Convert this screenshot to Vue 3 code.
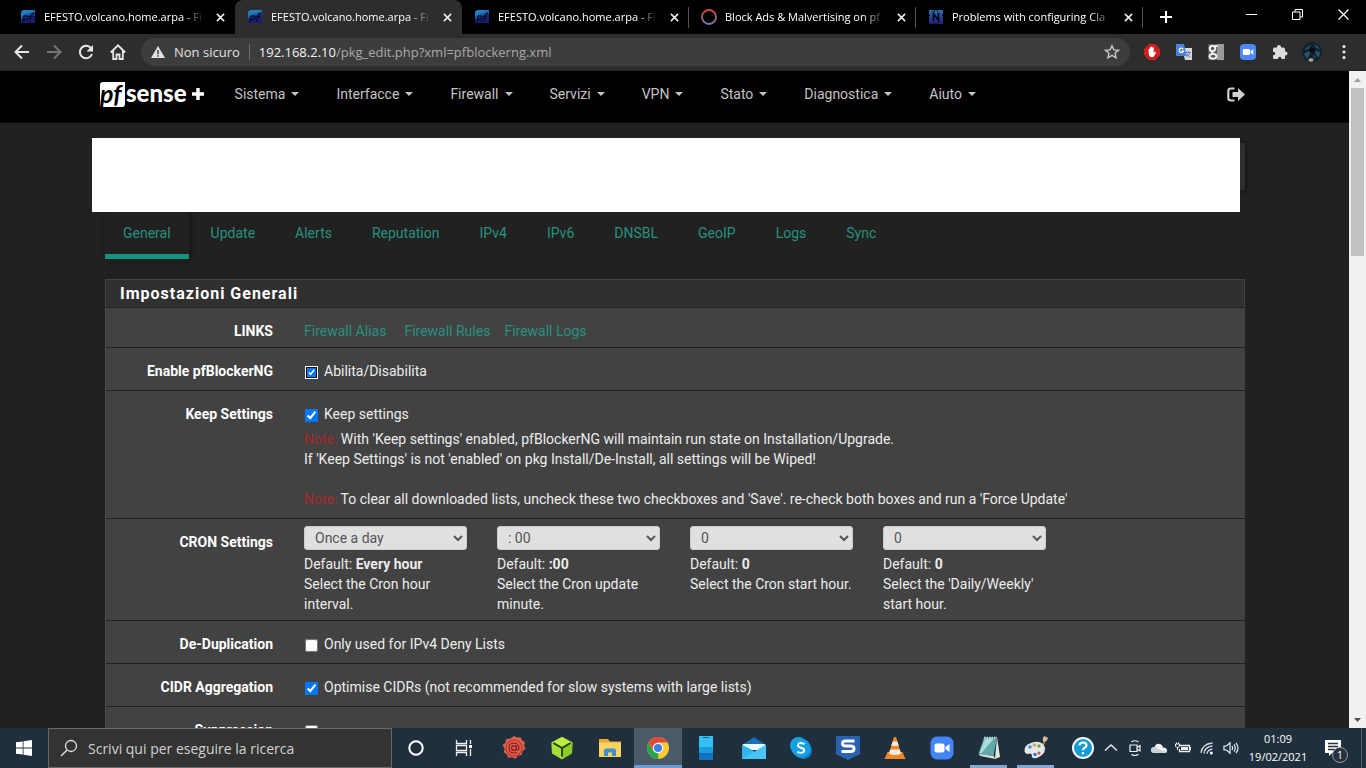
<script setup>
import { ref } from 'vue'

const tabs = [
  { title: 'EFESTO.volcano.home.arpa - Fi', icon: 'pf' },
  { title: 'EFESTO.volcano.home.arpa - Fi', icon: 'pf', active: true },
  { title: 'EFESTO.volcano.home.arpa - Fi', icon: 'pf' },
  { title: 'Block Ads & Malvertising on pf', icon: 'ring' },
  { title: 'Problems with configuring Cla', icon: 'net' },
]
const menus = ['Sistema', 'Interfacce', 'Firewall', 'Servizi', 'VPN', 'Stato', 'Diagnostica', 'Aiuto']
const sections = ['General', 'Update', 'Alerts', 'Reputation', 'IPv4', 'IPv6', 'DNSBL', 'GeoIP', 'Logs', 'Sync']
const crons = [
  { id: 'hour', value: 'Once a day', def: 'Every hour', help: 'Select the Cron hour interval.' },
  { id: 'minute', value: ': 00', def: ':00', help: 'Select the Cron update minute.' },
  { id: 'start', value: '0', def: '0', help: 'Select the Cron start hour.' },
  { id: 'daily', value: '0', def: '0', help: "Select the 'Daily/Weekly' start hour." },
]
const enabled = ref(true)
const keep = ref(true)
const dedup = ref(false)
const cidr = ref(true)
const suppression = ref(false)
</script>

<template>
  <div class="desktop">
    <header class="tabstrip">
      <div class="tabs">
        <div v-for="(t, i) in tabs" :key="i" class="tab" :class="{ active: t.active, ruled: i >= 2 }">
          <svg v-if="t.icon === 'pf'" class="fav" viewBox="0 0 16 16">
            <defs>
              <linearGradient id="pfg" x1="0" y1="0" x2="0.4" y2="1">
                <stop offset="0.3" stop-color="#1f7fc4" /><stop offset="0.75" stop-color="#1c1c70" />
              </linearGradient>
            </defs>
            <path d="M3 1h12v13H1V3z" fill="url(#pfg)" />
            <path d="M2.500 13 4.500 6.500M4.500 7h2.300q1.500 0 1 1.800t-2 1.800H4M9.500 13l2-7q.6-1.800 2.500-1.500M9 7.500h4" fill="none" stroke="#0b0f2c" stroke-width="1.500" />
          </svg>
          <svg v-else-if="t.icon === 'ring'" class="fav" viewBox="0 0 16 16">
            <defs>
              <linearGradient id="rg" x1="0" y1="0" x2="0" y2="1"><stop stop-color="#d8483c" /><stop offset="1" stop-color="#7d76b8" /></linearGradient>
            </defs>
            <circle cx="8" cy="8" r="7" fill="none" stroke="url(#rg)" stroke-width="1.800" />
          </svg>
          <svg v-else class="fav" viewBox="0 0 16 16">
            <defs>
              <linearGradient id="ng" x1="0" y1="0" x2="0" y2="1"><stop stop-color="#2c6fae" /><stop offset="1" stop-color="#2b1b7a" /></linearGradient>
            </defs>
            <path d="M1 1h5v1.500h1V1h2v1.500h1V1h5v5h-1v1h1v2h-1v1h1v5h-5v-1H9v1H7v-1H6v1H1v-5h1V9H1V7h1V6H1z" fill="url(#ng)" />
            <path d="M5.500 12V4.500l5 7V4" fill="none" stroke="#060a1c" stroke-width="1.800" />
          </svg>
          <span class="title">{{ t.title }}</span>
          <button class="close" aria-label="Chiudi scheda">
            <svg viewBox="0 0 10 10"><path d="M1 1l8 8M9 1l-8 8" stroke="#f1f1f1" stroke-width="1.700" /></svg>
          </button>
        </div>
      </div>
      <button class="plus" aria-label="Nuova scheda"><svg viewBox="0 0 12 12"><path d="M6 0v12M0 6h12" stroke="#fff" stroke-width="2" /></svg></button>
      <div class="wincontrols">
        <button aria-label="Riduci"><svg viewBox="0 0 11 11"><path d="M0 5.500h11" stroke="#fff" /></svg></button>
        <button aria-label="Ripristina"><svg viewBox="0 0 11 11"><path d="M.5 3h7.500v7.500H.5zM3 3V.5h7.500V8H8" fill="none" stroke="#fff" /></svg></button>
        <button aria-label="Chiudi"><svg viewBox="0 0 11 11"><path d="M.5.5l10 10M10.500.5l-10 10" stroke="#fff" stroke-width="1.200" /></svg></button>
      </div>
    </header>

    <div class="toolbar">
      <div class="navbtns">
        <button aria-label="Indietro"><svg viewBox="0 0 16 16"><path d="M15 8H2M8 1.500L1.500 8 8 14.500" fill="none" stroke="#e6e6e6" stroke-width="2" /></svg></button>
        <button aria-label="Avanti"><svg viewBox="0 0 16 16"><path d="M1 8h13M8 1.500L14.500 8 8 14.500" fill="none" stroke="#757575" stroke-width="2" /></svg></button>
        <button aria-label="Ricarica"><svg viewBox="0 0 16 16"><path d="M13.300 4.600A6.200 6.200 0 1 0 14 10" fill="none" stroke="#e6e6e6" stroke-width="2" /><path d="M15 1v6.500H8.500z" fill="#e6e6e6" /></svg></button>
        <button aria-label="Pagina iniziale"><svg viewBox="0 0 16 16"><path d="M.8 8.500L8 1.300l7.200 7.200M3.200 7v8h3.300v-4.500h3V15h3.300V7" fill="none" stroke="#e6e6e6" stroke-width="1.800" /></svg></button>
      </div>
      <div class="omnibox">
        <svg class="warn" viewBox="0 0 14 14"><path d="M7 1l7 12H0z" fill="#e4e4e4" /><path d="M7 5v4.300M7 10.300v1.500" stroke="#3b3b3b" stroke-width="1.500" /></svg>
        <span class="unsafe">Non sicuro</span>
        <span class="sep"></span>
        <span class="url"><b>192.168.2.10</b>/pkg_edit.php?xml=pfblockerng.xml</span>
        <button class="star" aria-label="Preferiti"><svg viewBox="0 0 16 16"><path d="M8 1.700l1.900 4.200 4.600.4-3.500 3 1.100 4.500L8 11.400l-4.100 2.400L5 9.300l-3.500-3 4.600-.4z" fill="none" stroke="#c8c8c8" stroke-width="1.400" /></svg></button>
      </div>
      <div class="extensions">
        <svg viewBox="0 0 16 16"><path d="M5 0h6l5 5v6l-5 5H5l-5-5V5z" fill="#d01f1f" /><path d="M4.600 8.500V5.200q.7-.8 1.200 0V3.500q.7-.8 1.300 0v-.7q.7-.8 1.300 0v1q.7-.8 1.300 0v5l1.300-1q1-.2.900.6L9.800 12.600q-2.800 1.500-4.600-.8z" fill="#fff" /></svg>
        <svg viewBox="0 0 16 16"><path d="M6 4h10v12H9z" fill="#d5d9de" /><path d="M0 0h8l3 12H0z" fill="#4b83dc" /><path d="M7.300 5.200A2.200 2.200 0 1 0 7.500 7H5.400" fill="none" stroke="#fff" stroke-width="1.100" /><path d="M9.800 8.500H15M12.300 7v1.500M14 8.500q-1 3-3.500 4.500M11 10l3 3.500" fill="none" stroke="#6a7f9e" /></svg>
        <svg viewBox="0 0 16 16"><path d="M0 0h16v16H0z" fill="#9a9a9a" /><path d="M0 0h9v16H0z" fill="#565656" /><circle cx="4.500" cy="4.500" r="2.700" fill="none" stroke="#f0f0f0" stroke-width="2" /><path d="M5 7.500q-2 1.200 0 2M7 2h2.500" fill="none" stroke="#f0f0f0" stroke-width="2" /><ellipse cx="5" cy="12.300" rx="3.500" ry="2.400" fill="none" stroke="#f0f0f0" stroke-width="2" /></svg>
        <svg viewBox="0 0 16 16"><rect width="16" height="16" rx="4" fill="#4a8af4" /><rect x="2.800" y="5" width="7.200" height="6" rx="1.200" fill="#fff" /><path d="M10.500 7.300L13.300 5v6l-2.800-2.200z" fill="#fff" /></svg>
        <svg viewBox="0 0 16 16"><path d="M1 5q0-1.500 1.500-1.500H5V3a2 2 0 0 1 4 0v.5h2.500Q13 3.500 13 5v2.500h.5a2 2 0 0 1 0 4H13V14q0 1-1 1H9.500v-.5a1.700 1.700 0 0 0-3.400 0v.5H2q-1 0-1-1v-2.700h.5a1.800 1.800 0 0 0 0-3.600H1z" fill="#dcdcdc" /></svg>
        <svg class="avatar" viewBox="0 0 20 20"><circle cx="10" cy="10" r="10" fill="#10222d" /><path d="M2 8q3-4 7-5l-2 4zM12 2q4 1 6 5l-4-1z" fill="#24505f" /><path d="M2 12l5-3 1 3-3 5zM13 9l5 1-1 5-3-2z" fill="#2c5468" /><path d="M8 5l5 2-2 5-4-3z" fill="#0a0d12" /><path d="M10 13l4 1-2 4z" fill="#1d3f4e" /><ellipse cx="9" cy="18" rx="2.500" ry="1.800" fill="#b9a79b" /></svg>
        <svg viewBox="0 0 16 16"><g fill="#e6e6e6"><circle cx="8" cy="2.500" r="1.600" /><circle cx="8" cy="8" r="1.600" /><circle cx="8" cy="13.500" r="1.600" /></g></svg>
      </div>
    </div>

    <div class="viewport">
      <main class="page">
        <nav class="mainnav">
          <div class="wrap">
            <a class="logo" href="#" aria-label="pfSense plus"><span class="pf">pf</span><span class="sense">sense</span><svg viewBox="0 0 14 14"><path d="M7 1v12M1 7h12" stroke="#fff" stroke-width="3.400" /></svg></a>
            <a v-for="m in menus" :key="m" href="#" class="menu">{{ m }}<i class="caret"></i></a>
            <a class="logout" href="#" aria-label="Logout">
              <svg viewBox="0 0 18 15"><path d="M7.500 1.500H4Q1.300 1.500 1.300 4v7Q1.300 13.500 4 13.500h3.500" fill="none" stroke="#cfcfcf" stroke-width="2.200" /><path d="M5.500 5H11V1l7 6.500-7 6.500v-4H5.500z" fill="#cfcfcf" /></svg>
            </a>
          </div>
        </nav>

        <div class="wrap column">
          <div class="crumbs"><div class="cover"></div></div>
          <nav class="sections">
            <a v-for="(s, i) in sections" :key="s" href="#" :class="{ current: i === 0 }">{{ s }}</a>
          </nav>

          <section class="panel">
            <h2>Impostazioni Generali</h2>
            <div class="row links">
              <span class="name">LINKS</span>
              <div class="field linklist"><a href="#" class="first">Firewall Alias</a><a href="#">Firewall Rules</a><a href="#">Firewall Logs</a></div>
            </div>
            <div class="row">
              <span class="name">Enable pfBlockerNG</span>
              <div class="field"><label class="check"><input v-model="enabled" type="checkbox" class="focused" />Abilita/Disabilita</label></div>
            </div>
            <div class="row">
              <span class="name">Keep Settings</span>
              <div class="field">
                <label class="check"><input v-model="keep" type="checkbox" />Keep settings</label>
                <p class="help"><em>Note:</em> With 'Keep settings' enabled, pfBlockerNG will maintain run state on Installation/Upgrade.<br />If 'Keep Settings' is not 'enabled' on pkg Install/De-Install, all settings will be Wiped!<br /><br /><em>Note:</em> To clear all downloaded lists, uncheck these two checkboxes and 'Save'. re-check both boxes and run a 'Force Update'</p>
              </div>
            </div>
            <div class="row cron">
              <span class="name">CRON Settings</span>
              <div class="field crons">
                <div v-for="c in crons" :key="c.id">
                  <select :id="c.id"><option>{{ c.value }}</option></select>
                  <label :for="c.id">Default: <b>{{ c.def }}</b><br />{{ c.help }}</label>
                </div>
              </div>
            </div>
            <div class="row">
              <span class="name">De-Duplication</span>
              <div class="field"><label class="check"><input v-model="dedup" type="checkbox" />Only used for IPv4 Deny Lists</label></div>
            </div>
            <div class="row">
              <span class="name">CIDR Aggregation</span>
              <div class="field"><label class="check"><input v-model="cidr" type="checkbox" />Optimise CIDRs (not recommended for slow systems with large lists)</label></div>
            </div>
            <div class="row">
              <label class="name" for="suppression">Suppression</label>
              <div class="field check"><input id="suppression" v-model="suppression" type="checkbox" /></div>
            </div>
          </section>
        </div>
      </main>
      <div class="scrollbar">
        <svg viewBox="0 0 17 17"><path d="M5 11l3.500-4 3.500 4z" fill="#a0a0a0" /></svg>
        <div class="track"><div class="thumb"></div></div>
        <svg viewBox="0 0 17 17"><path d="M5 7l3.500 4L12 7z" fill="#505050" /></svg>
      </div>
    </div>

    <footer class="taskbar">
      <button class="start" aria-label="Start"><svg viewBox="0 0 16 16"><path d="M0 2.300L6.700 1.400v6.200H0zM7.500 1.300L16 0v7.600H7.500zM0 8.400h6.700v6.200L0 13.700zM7.500 8.400H16V16l-8.500-1.200z" fill="#fff" /></svg></button>
      <label class="search">
        <svg viewBox="0 0 18 18"><circle cx="11" cy="7" r="5.500" fill="none" stroke="#e0e0e0" stroke-width="1.300" /><path d="M7 11L1 17" stroke="#e0e0e0" stroke-width="1.400" /></svg>
        <input type="text" placeholder="Scrivi qui per eseguire la ricerca" aria-label="Cerca" />
      </label>
      <div class="apps">
        <button aria-label="Cortana"><svg viewBox="0 0 24 24"><circle cx="12" cy="12" r="6.700" fill="none" stroke="#fff" stroke-width="2" /></svg></button>
        <button aria-label="Attività"><svg viewBox="0 0 24 24"><path d="M4.500 4v3.500h10V4M4.500 20v-3.500h10V20M4.500 9.500h10v5h-10zM18.500 4v4M18.500 13v7" fill="none" stroke="#eee" stroke-width="1.300" /><path d="M17 9h3v3h-3z" fill="#fff" /></svg></button>
        <button class="pinned" aria-label="Posta certificata"><svg viewBox="0 0 24 24"><path d="M12 0l3 1.500 3.500-.2 1.500 3 3 2-1 3.500 1.500 3-3 2.500-.8 3.800-3.700.7-2.500 3-3.500-1.500-4 .5-1-3.300-3.300-2.200 1-3.500L.5 9l3-2.300L4 3l4-.2z" fill="#e0604f" /><circle cx="12" cy="12" r="8" fill="none" stroke="#b23a30" stroke-width="1.200" /><circle cx="12" cy="12" r="2.400" fill="none" stroke="#8d1f1c" stroke-width="1.400" /><path d="M14.500 9.300v4q2.200 1.500 2.500-1.300-.5-5-5.200-5-4.800.3-4.800 5 .2 5 5 5 2 0 3-.8" fill="none" stroke="#8d1f1c" stroke-width="1.200" /></svg></button>
        <button aria-label="Balena"><svg viewBox="0 0 24 24"><path d="M12 .8l10.700 5.700L12 12.500 1.300 6.500z" fill="#b9f03e" /><path d="M1.300 6.500L12 12.500v11L2 17.500z" fill="#a5de35" /><path d="M22.700 6.500L12 12.500v11l10-6z" fill="#8dcc26" /><path d="M3.500 7L12 12l8.500-5M12 12v8.500" fill="none" stroke="#1e3a14" stroke-width="1.800" /></svg></button>
        <button aria-label="Esplora file"><svg viewBox="0 0 24 24"><path d="M1 3h9l2 2.500h11V21H1z" fill="#e8a92c" /><path d="M1 6.500h22V21H1z" fill="#f9d465" /><path d="M6 20v-5.500q0-2 2-2h8q2 0 2 2V20h-4v-3.500h-4V20z" fill="#3f8fc9" /></svg></button>
        <button class="on" aria-label="Chrome"><svg viewBox="0 0 24 24"><circle cx="12" cy="12" r="11" fill="#fbc933" /><path d="M2.500 6.500A11 11 0 0 1 21.500 6.500H12L7.500 14.500z" fill="#e0483b" /><path d="M2.500 6.500L7.300 14.700 12 17l.5 6A11 11 0 0 1 2.500 6.500z" fill="#2ba24c" /><circle cx="12" cy="12" r="5.200" fill="#fff" /><circle cx="12" cy="12" r="4.100" fill="#3f7fe8" /></svg></button>
        <button aria-label="Telefono"><svg viewBox="0 0 24 24"><path d="M5 0h14v24H5z" fill="#1272be" /><path d="M5 0h14v17H5z" fill="#1b9ee0" /><path d="M5 0h14v11H5z" fill="#33c1f1" /><path d="M9 1.500h6" stroke="#17608d" /></svg></button>
        <button aria-label="Posta"><svg viewBox="0 0 24 24"><path d="M0 9L12 1l12 8v4H0z" fill="#1a6fb8" /><path d="M1 8h22v6H1z" fill="#f2fafd" /><path d="M0 8.500l12 6.500v8H0z" fill="#2fb5ec" /><path d="M24 8.500V23H0z" fill="#46c6f5" /></svg></button>
        <button aria-label="Skype"><svg viewBox="0 0 24 24"><circle cx="9.500" cy="9.500" r="8.500" fill="#16a5e6" /><circle cx="14.500" cy="14.500" r="8.500" fill="#1081d0" /><circle cx="12" cy="12" r="9.500" fill="#13a0e4" /><path d="M15.500 8.300Q14 7 12 7q-3 .1-3 2.300 0 1.900 3 2.400 3.200.6 3.200 2.700-.2 2.400-3.300 2.500-2.200 0-3.600-1.300" fill="none" stroke="#fff" stroke-width="1.900" /></svg></button>
        <button aria-label="Simplenote"><svg viewBox="0 0 24 24"><path d="M0 0h24v18l-12 6-12-6z" fill="#2b62ad" /><path d="M18.500 5H9.500Q6.500 5 6.500 7.500T9.500 10h5Q18 10 18 12.700T14.500 15.500H5.500" fill="none" stroke="#fff" stroke-width="3" /></svg></button>
        <button aria-label="VLC"><svg viewBox="0 0 24 24"><path d="M4.500 16h15l3 7h-21z" fill="#f5871f" /><path d="M11 1h2l5.500 18q-6.500 3-13 0z" fill="#f28a24" /><path d="M9.600 5.500h4.800l1.400 4.300H8.200zM7.200 13.500h9.600l1.300 4q-6 3-12.200 0z" fill="#f0ece7" /></svg></button>
        <button aria-label="Zoom"><svg viewBox="0 0 24 24"><rect x=".5" y=".5" width="23" height="23" rx="6.500" fill="#4285f4" /><rect x="4.500" y="7.500" width="10" height="9" rx="2" fill="#fff" /><path d="M15.500 11l4-3v8l-4-3z" fill="#fff" /></svg></button>
        <button class="open" aria-label="Blocco note"><svg viewBox="0 0 24 24"><path d="M20 1l3 20-5 2z" fill="#e3e7dd" /><path d="M7 1.500h13L16.500 20l-15-2z" fill="#5fa9ab" /><path d="M8 2.500h9L4.500 17H2.500z" fill="#a9dcd6" /><path d="M1.500 18l15 2 2 3-15-3z" fill="#dfe6dc" /><path d="M7 1.500h13" stroke="#dbe2e0" stroke-width="1.600" stroke-dasharray="1.500 1" /></svg></button>
        <button class="open" aria-label="Paint"><svg viewBox="0 0 24 24"><path d="M17.500 14.500L21 3" stroke="#a97a4b" stroke-width="2.200" /><path d="M19 5q-1-4 2-5 1 1.500 3 1.500-.5 3.500-3.500 4.500z" fill="#d8bd91" /><path d="M7 7q7-3 12 1 4 5 0 10-5 5-10 4-2-1-1-3-1-2.500-4-1-3 0-3.500-3Q0 9 7 7z" fill="#e6e8e8" /><circle cx="6" cy="11" r="1.800" fill="#4695d6" /><circle cx="10.500" cy="9" r="1.800" fill="#e9a33a" /><circle cx="15" cy="10" r="1.700" fill="#67aa4d" /><circle cx="11" cy="18.500" r="1.800" fill="#3a79c9" /><circle cx="15" cy="17" r="1.500" fill="#cf4a3e" /></svg></button>
      </div>
      <div class="tray">
        <svg class="help-ic" viewBox="0 0 24 24"><circle cx="12" cy="12" r="11" fill="#f4fafd" /><circle cx="12" cy="12" r="9" fill="#139ad7" /><path d="M8.500 9.500q0-3 3.500-3t3.500 2.800q0 1.700-1.800 2.500-1.700.8-1.700 2.500M12 16v2.200" fill="none" stroke="#fff" stroke-width="2.200" /></svg>
        <svg viewBox="0 0 16 16"><path d="M2 10.500L8 5l6 5.500" fill="none" stroke="#eee" stroke-width="1.400" /></svg>
        <svg viewBox="0 0 16 16"><path d="M3 5h7v6.500H3zM10 7.500l3-2v5.500l-3-2M4.500 2q3-2.500 7 0M4.500 14.300q3 2.500 7 0" fill="none" stroke="#eee" stroke-width="1.200" /></svg>
        <svg viewBox="0 0 16 16"><path d="M4 13Q0 13 0 10t3.500-3Q5 3 9 4q2.500.7 3 3.500 4 0 4 3t-3 2.500z" fill="#f2f2f2" /><path d="M3.500 7q3 0 4 2.200L16 12q-1 1-3 1H4Q0 13 0 10q.4-2.800 3.500-3z" fill="#cdd2d5" /></svg>
        <svg viewBox="0 0 16 16"><path d="M5 5.500h9.500v6H4.500V9M15.500 7v3" fill="none" stroke="#eee" stroke-width="1.300" /><path d="M6 7h7v3H6z" fill="#eee" /><path d="M.5 4h4v2.500q-2 2-4 0zM1.500 2.500V4M3.500 2.500V4M2.500 7.500V10" fill="none" stroke="#eee" /></svg>
        <svg viewBox="0 0 16 16"><path d="M2 13Q3 4 13.500 3M5 13.500q.5-6.500 8.500-7.500M8 13.800q.5-4 5.500-4.600" fill="none" stroke="#d4d8da" stroke-width="1.300" /><circle cx="12.300" cy="13" r="1.500" fill="#fff" /></svg>
        <svg viewBox="0 0 16 16"><path d="M1 6h2.500L7 2.800v10.400L3.500 10H1zM9 6q1.200 2 0 4M11 4.300q2.500 3.700 0 7.400M13 2.800q4 5.200 0 10.400" fill="none" stroke="#eee" stroke-width="1.200" /></svg>
        <div class="clock"><span>01:09</span><span>19/02/2021</span></div>
        <button class="notes" aria-label="Notifiche"><svg viewBox="0 0 16 16"><path d="M0 0h16v13H7l-3 3v-3H0z" fill="#fff" /><path d="M3 3.500h10M3 6.500h10M3 9.500h7" stroke="#26333e" stroke-width="1.300" /></svg><span class="count">1</span></button>
      </div>
    </footer>
  </div>
</template>

<style>
body { margin: 0; overflow: hidden; background: #212121; }
</style>

<style scoped>
* { box-sizing: border-box; }
button { padding: 0; border: 0; background: none; display: flex; align-items: center; justify-content: center; font-family: inherit; color: #fff; }
svg { display: block; flex: none; }
a { text-decoration: none; color: #27917f; }
.desktop { height: 100vh; display: flex; flex-direction: column; font-family: "Open Sans", "Noto Sans", sans-serif; color: #fff; }

.tabstrip { flex: none; height: 34px; background: #000; display: flex; }
.tabs { flex: 0 1 1143px; min-width: 0; display: flex; padding-left: 8px; }
.tab { flex: 1; min-width: 0; display: flex; align-items: center; padding: 0 6px 0 12px; border-right: 1px solid transparent; }
.tab.ruled { border-image: linear-gradient(#000 8px, #555 8px, #555 27px, #000 27px) 1; }
.tab.active { background: #2d2d2d; border-radius: 8px 8px 0 0; }
.fav { width: 16px; height: 16px; }
.title { flex: 1; min-width: 0; margin-left: 8px; font-size: 11px; line-height: 18px; white-space: nowrap; overflow: hidden; -webkit-mask-image: linear-gradient(90deg, #000 calc(100% - 26px), transparent calc(100% - 4px)); mask-image: linear-gradient(90deg, #000 calc(100% - 26px), transparent calc(100% - 4px)); }
.close { width: 16px; height: 16px; margin-left: 4px; }
.close svg { width: 9px; height: 9px; }
.plus { width: 46px; }
.plus svg { width: 12px; height: 12px; }
.wincontrols { margin-left: auto; display: flex; height: 28px; }
.wincontrols button { width: 46px; }
.wincontrols svg { width: 11px; height: 11px; }

.toolbar { flex: none; height: 37px; background: #2d2d2d; border-bottom: 1px solid #242424; display: flex; align-items: center; }
.navbtns { display: flex; padding: 0 7px 0 6px; }
.navbtns button { width: 32px; height: 32px; }
.navbtns svg { width: 16px; height: 16px; }
.omnibox { flex: 1; min-width: 0; height: 28px; border-radius: 14px; background: #3d3d3d; display: flex; align-items: center; padding: 0 10px; font-size: 13px; line-height: 20px; white-space: nowrap; }
.warn { width: 14px; height: 14px; }
.unsafe { margin-left: 9px; color: #e0e0e0; }
.sep { width: 1px; height: 16px; background: #6c6c6c; margin: 0 9px; }
.url { color: #a8a8a8; flex: 1; min-width: 0; overflow: hidden; }
.url b { font-weight: 400; color: #f4f4f4; }
.star svg { width: 16px; height: 16px; }
.extensions { display: flex; align-items: center; gap: 16px; padding: 0 14px 0 14px; }
.extensions svg { width: 16px; height: 16px; }
.extensions .avatar { width: 20px; height: 20px; margin: 0 -2px; }

.viewport { flex: 1; min-height: 0; display: flex; }
.page { flex: 1; min-width: 0; overflow: hidden; background: #212121; font-family: Roboto, "Liberation Sans", sans-serif; font-size: 14px; line-height: 20px; }
.wrap { max-width: 1141px; margin: 0 auto; padding-left: 1px; }
.mainnav { background: #000; height: 52px; border-bottom: 1px solid #101010; }
.mainnav .wrap { display: flex; align-items: center; height: 46px; }
.logo { display: flex; align-items: center; color: #fff; margin: 0 30px 0 -5px; font-family: Lato, sans-serif; }
.pf { width: 25px; height: 25px; border-radius: 3px 0 3px 0; background: #fff; color: #000; font-size: 25px; line-height: 22px; font-weight: 700; font-style: italic; }
.sense { font-size: 24px; line-height: 24px; font-weight: 900; margin-left: 1px; padding-bottom: 2px; }
.logo svg { width: 14px; height: 14px; margin-left: 4px; }
.menu { display: flex; align-items: center; color: #c3c3c3; margin-right: 37px; }
.caret { border: 4px solid transparent; border-top-color: #c3c3c3; border-bottom: 0; margin-left: 6px; }
.logout { margin-left: auto; }
.logout svg { width: 18px; height: 15px; }

.crumbs { position: relative; height: 47px; margin-top: 20px; background: #2e2e2e; box-shadow: 1px 1px 3px #111; }
.cover { position: absolute; left: -13px; right: 5px; top: -5px; height: 74px; background: #fff; z-index: 1; }
.sections { display: flex; gap: 4px; padding-top: 20px; }
.sections a { padding: 13px 18px; border-bottom: 5px solid transparent; height: 49px; }
.sections .current { border-color: #119580; box-shadow: 2px 0 5px #151515; }

.panel { margin-top: 20px; background: #424242; border-left: 1px solid #4a4a4a; }
.panel h2 { margin: 0 0 0 -1px; height: 29px; padding: 4px 14px; border: 1px solid #424242; border-bottom-color: #212121; background: #303030; font-size: 16px; line-height: 20px; font-weight: 700; letter-spacing: 1px; }
.row { display: grid; grid-template-columns: 183px 1fr; padding: 13px 0 9px; border-bottom: 1px solid #212121; color: #ececec; }
.row.links { padding-bottom: 6px; }
.row.cron { padding: 7px 0 6px; }
.name { text-align: right; padding-right: 16px; font-weight: 700; color: #fff; }
.cron .name { padding-top: 6px; }
.field { padding-left: 15px; min-width: 0; }
.linklist a { margin-right: 14px; }
.linklist .first { margin-right: 18px; }
.check { display: flex; width: max-content; min-height: 20px; }
.check input { width: 13px; height: 13px; margin: 5px 6px 0 1px; accent-color: #0075ff; }
.check .focused { width: 9px; height: 9px; margin: 7px 8px 0 3px; outline: 1px solid #fff; outline-offset: 1px; border-radius: 2px; box-shadow: 0 0 0 1px #101010; }
.help { margin: 5px 0 0; }
.help em { font-style: normal; color: #a52a2a; }
.crons { display: grid; grid-template-columns: repeat(4, minmax(0, 1fr)); gap: 30px; max-width: 757px; }
.crons select { display: block; width: 100%; height: 24px; padding: 0 6px; margin-bottom: 4px; border: 1px solid #ccc; border-radius: 3px; background-color: #e0e0e0; color: #555; font-family: inherit; font-size: 14px; }
.crons label { display: block; }

.scrollbar { flex: none; width: 17px; background: #f1f1f1; display: flex; flex-direction: column; }
.scrollbar svg { width: 17px; height: 17px; }
.track { flex: 1; padding: 0 2px; }
.thumb { height: 27%; background: #c1c1c1; }

.taskbar { flex: none; height: 40px; background: #1f2f3d; display: flex; align-items: stretch; }
.start { width: 48px; }
.start svg { width: 16px; height: 16px; }
.search { flex: 0 1 344px; display: flex; align-items: center; border: 1px solid #686868; background: #333; padding: 0 11px; gap: 10px; }
.search svg { width: 18px; height: 18px; }
.search input { flex: 1; min-width: 0; border: 0; padding: 0; background: none; font-family: inherit; font-size: 14px; color: #d2d2d2; outline: 0; }
.search input::placeholder { color: #d2d2d2; opacity: 1; }
.apps { flex: 0 1 auto; display: flex; }
.apps button { flex: 0 1 48px; width: 48px; border: solid transparent; border-width: 3px 0; }
.apps button:nth-child(n + 8) { flex-basis: 47px; width: 47px; }
.apps .pinned { margin-left: 2px; }
.apps button.on { background: #4b5a68; border-top-color: #4b5a68; border-bottom-color: #7399d2; }
.apps .open { border-image: linear-gradient(90deg, transparent 5px, #86a5d0 5px, #86a5d0 42px, transparent 42px) 0 0 3 0; }
.apps svg { width: 24px; height: 24px; }
.tray { margin-left: auto; display: flex; align-items: center; gap: 8px; }
.tray svg { width: 16px; height: 16px; }
.tray .help-ic { width: 24px; height: 24px; }
.clock { display: flex; flex-direction: column; align-items: center; width: 62px; font-size: 11px; line-height: 18px; }
.notes { position: relative; justify-content: flex-start; width: 53px; height: 40px; margin: 0 4px 0 -8px; padding-left: 16px; border-right: 1px solid #51606c; }
.notes svg { width: 16px; height: 16px; }
.count { position: absolute; left: 23px; top: 19px; width: 16px; height: 16px; border-radius: 8px; border: 1px solid #999; background: #26333e; font-size: 11px; line-height: 14px; text-align: center; }
</style>
